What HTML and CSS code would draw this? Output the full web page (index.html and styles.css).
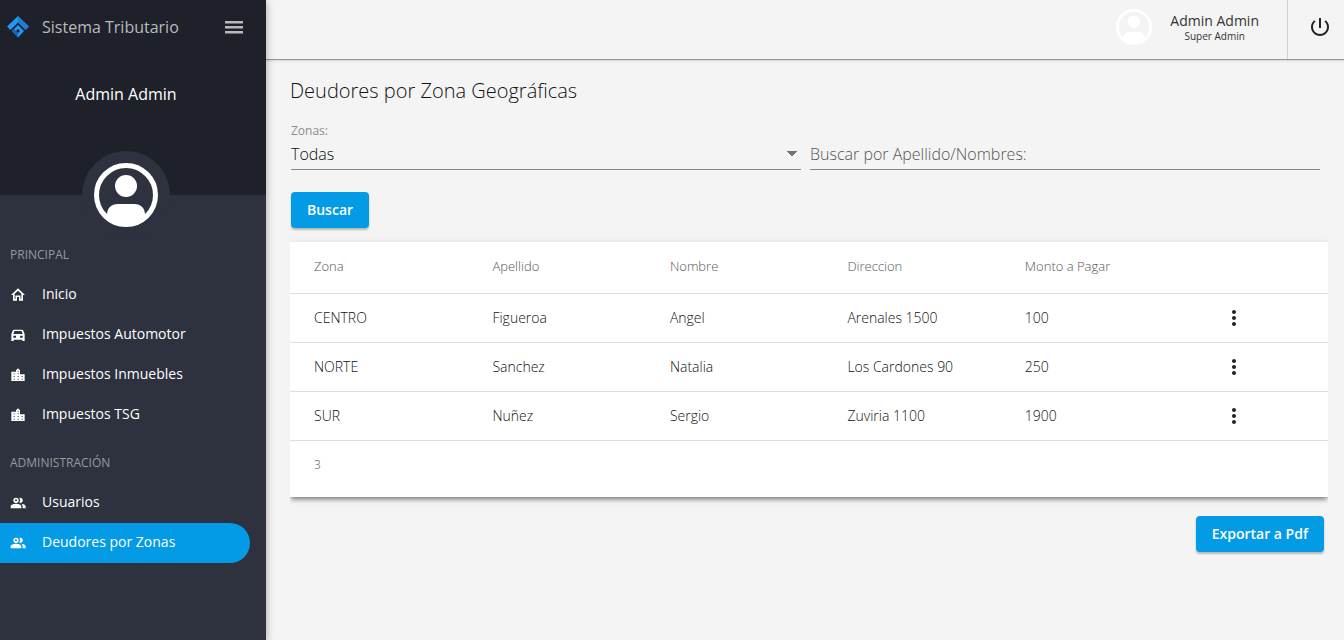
FILE: index.html
```html
<!DOCTYPE html>
<html lang="es">
<head>
<meta charset="utf-8">
<meta name="viewport" content="width=device-width, initial-scale=1">
<title>Sistema Tributario</title>
<link rel="stylesheet" href="styles.css">
</head>
<body>
<svg class="sprite" aria-hidden="true">
  <symbol id="account" viewBox="0 0 64 64">
    <circle cx="32" cy="32" r="29.5" fill="none" stroke="currentColor" stroke-width="5"/>
    <circle cx="32" cy="23" r="11" fill="currentColor"/>
    <path fill="currentColor" d="M13 52c0-7 4-11 11-11h16c7 0 11 4 11 11-5 6-12 10-19 10s-14-4-19-10z"/>
  </symbol>
  <symbol id="home" viewBox="0 0 24 24"><path fill="currentColor" d="M12 2L1.500 12H4.500v8.500H10.500V15h3v5.500h6V12h3zM12 5.500l5 4.600V18h-1.200v-5.200H8.200V18H7v-7.900z"/></symbol>
  <symbol id="car" viewBox="0 0 24 24"><path fill="currentColor" fill-rule="evenodd" d="M6 4h12c1 0 1.700.500 2 1.500L22 11v10h-3.500v-2h-13v2H2V11l2-5.500C4.300 4.500 5 4 6 4zm.600 2L5 10.500h14L17.400 6H6.600zM5 13v3h4v-3H5zm10 0v3h4v-3h-4z"/></symbol>
  <symbol id="city" viewBox="0 0 24 24"><path fill="currentColor" d="M15 11V5l-3-3-3 3v2H2v14h20V11h-7zm-8 8H5.500v-1.500H7V19zm0-4H5.500v-1.500H7V15zm0-4H5.500V9.500H7V11zm6 8h-1.500v-1.500H13V19zm0-4h-1.500v-1.500H13V15zm0-4h-1.500V9.500H13V11zm0-4h-1.500V5.500H13V7zm6 12h-1.500v-1.500H19V19zm0-4h-1.500v-1.500H19V15z"/></symbol>
  <symbol id="people" viewBox="0 0 24 24"><path fill="currentColor" fill-rule="evenodd" d="M9 13c2.700 0 8 1.200 8 4v3H1v-3c0-2.800 5.300-4 8-4zm8 0c2.300.300 6.500 1.500 6.500 4v3H19v-3c0-1.800-.800-3-2-4zM9 4a4 4 0 1 1 0 8 4 4 0 0 1 0-8zm0 2.500a1.500 1.500 0 1 0 0 3 1.500 1.500 0 0 0 0-3zM14 4.200c.300-.100.700-.200 1-.200a4 4 0 1 1-1 7.800c1.300-2.300 1.300-5.300 0-7.600z"/></symbol>
  <symbol id="dots" viewBox="0 0 24 24"><path fill="currentColor" d="M12 8c1.100 0 2-.900 2-2s-.900-2-2-2-2 .900-2 2 .900 2 2 2zm0 2c-1.100 0-2 .900-2 2s.900 2 2 2 2-.900 2-2-.900-2-2-2zm0 6c-1.100 0-2 .900-2 2s.900 2 2 2 2-.900 2-2-.900-2-2-2z"/></symbol>
</svg>
<div class="app">
  <aside class="sidebar">
    <div class="profile">
      <div class="brand">
        <svg class="logo" viewBox="0 0 22 22" aria-hidden="true">
          <path fill="#2196f3" d="M11 0l11 10.500-3.500 3.500L11 6.500 3.500 14 0 10.500z"/>
          <path fill="#1565c0" d="M11 0l11 10.500-3.500 3.500L11 6.500z" opacity=".5"/>
          <path fill="#2196f3" fill-rule="evenodd" d="M11 9l6 6-6 6.500L5 15zm0 4l-2 2 2 2 2-2z"/>
          <path fill="#1565c0" d="M5 15l2-2 4 4v4.500z"/>
        </svg>
        <span class="brand-name">Sistema Tributario</span>
        <button class="menu-button" type="button" aria-label="Menú">
          <svg width="24" height="24" viewBox="0 0 24 24" aria-hidden="true"><path fill="currentColor" d="M3 6h18v2.500H3zm0 5h18v2.500H3zm0 5h18v2.500H3z"/></svg>
        </button>
      </div>
      <div class="profile-name">Admin Admin</div>
      <div class="avatar"><svg width="64" height="64" aria-hidden="true"><use href="#account"/></svg></div>
    </div>
    <nav class="nav">
      <h2 class="nav-title">PRINCIPAL</h2>
      <a class="nav-item" href="#"><svg class="nav-icon"><use href="#home"/></svg>Inicio</a>
      <a class="nav-item" href="#"><svg class="nav-icon"><use href="#car"/></svg>Impuestos Automotor</a>
      <a class="nav-item" href="#"><svg class="nav-icon"><use href="#city"/></svg>Impuestos Inmuebles</a>
      <a class="nav-item" href="#"><svg class="nav-icon"><use href="#city"/></svg>Impuestos TSG</a>
      <h2 class="nav-title">ADMINISTRACIÓN</h2>
      <a class="nav-item" href="#"><svg class="nav-icon"><use href="#people"/></svg>Usuarios</a>
      <a class="nav-item active" href="#" aria-current="page"><svg class="nav-icon"><use href="#people"/></svg>Deudores por Zonas</a>
    </nav>
  </aside>
  <div class="page">
    <header class="toolbar">
      <button class="user" type="button">
        <svg class="user-avatar" width="36" height="36" aria-hidden="true"><use href="#account"/></svg>
        <span class="user-text"><span class="user-name">Admin Admin</span><span class="user-role">Super Admin</span></span>
      </button>
      <button class="power" type="button" aria-label="Salir">
        <svg width="24" height="24" viewBox="0 0 24 24" aria-hidden="true"><path fill="currentColor" d="M13 3h-2v10h2V3zm4.830 2.170l-1.420 1.420C17.990 7.860 19 9.810 19 12c0 3.870-3.130 7-7 7s-7-3.130-7-7c0-2.190 1.010-4.140 2.580-5.420L6.170 5.170C4.230 6.820 3 9.260 3 12c0 4.970 4.030 9 9 9s9-4.030 9-9c0-2.740-1.230-5.180-3.170-6.830z"/></svg>
      </button>
    </header>
    <main class="content">
      <h1 class="title">Deudores por Zona Geográficas</h1>
      <form class="filters">
        <div class="fields">
          <div class="field">
            <label class="field-label" for="zona">Zonas:</label>
            <select class="control select" id="zona"><option>Todas</option></select>
          </div>
          <div class="field">
            <input class="control" type="text" aria-label="Buscar por Apellido/Nombres" placeholder="Buscar por Apellido/Nombres:">
          </div>
        </div>
        <button class="button" type="button">Buscar</button>
      </form>
      <div class="card">
        <table class="table">
          <thead><tr><th>Zona</th><th>Apellido</th><th>Nombre</th><th>Direccion</th><th>Monto a Pagar</th><th></th></tr></thead>
          <tbody>
            <tr><td>CENTRO</td><td>Figueroa</td><td>Angel</td><td>Arenales 1500</td><td>100</td><td><button class="more" type="button" aria-label="Opciones"><svg width="24" height="24"><use href="#dots"/></svg></button></td></tr>
            <tr><td>NORTE</td><td>Sanchez</td><td>Natalia</td><td>Los Cardones 90</td><td>250</td><td><button class="more" type="button" aria-label="Opciones"><svg width="24" height="24"><use href="#dots"/></svg></button></td></tr>
            <tr><td>SUR</td><td>Nuñez</td><td>Sergio</td><td>Zuviria 1100</td><td>1900</td><td><button class="more" type="button" aria-label="Opciones"><svg width="24" height="24"><use href="#dots"/></svg></button></td></tr>
          </tbody>
          <tfoot><tr><td colspan="6">3</td></tr></tfoot>
        </table>
      </div>
      <div class="actions"><button class="button" type="button">Exportar a Pdf</button></div>
    </main>
  </div>
</div>
</body>
</html>
```
FILE: styles.css
```css
* { box-sizing: border-box; }
body { margin: 0; background: #f4f4f4; color: #333; font-family: "Open Sans", "Noto Sans", sans-serif; font-size: 14px; }
button { border: 0; padding: 0; background: none; font: inherit; color: inherit; cursor: pointer; }
svg { display: block; flex: none; }
.sprite { position: absolute; width: 0; height: 0; }
.app { display: flex; min-height: 100vh; }

.sidebar { position: relative; z-index: 1; flex: none; width: 266px; background: #2d323e; color: #fff; box-shadow: 0 2px 8px rgba(0, 0, 0, .35); }
.profile { display: flex; flex-direction: column; align-items: center; height: 195px; background: #1e2129; }
.brand { display: flex; flex: none; align-items: center; align-self: stretch; height: 54px; padding: 0 20px 0 7px; color: #b9babd; }
.logo { width: 22px; height: 22px; }
.brand-name { flex: 1; margin-left: 13px; font-size: 16px; }
.profile-name { margin: 29px 14px 0 0; font-size: 16px; line-height: 22px; }
.avatar { display: grid; place-items: center; flex: none; width: 88px; height: 88px; margin: 46px 14px 0 0; border-radius: 50%; background: #2d323e; }
.nav { padding: 40px 16px 0 0; }
.nav-title { margin: 0; padding-left: 10px; font-size: 12px; font-weight: 400; line-height: 40px; color: #9799a0; }
.nav-item + .nav-title { margin-top: 8px; }
.nav-item { display: flex; align-items: center; gap: 16px; height: 40px; padding: 0 0 4px 10px; border-radius: 0 20px 20px 0; color: #fff; text-decoration: none; }
.nav-icon { width: 16px; height: 16px; margin-top: 4px; }
.active { background: #039be5; }

.page { flex: 1; min-width: 0; }
.toolbar { display: flex; justify-content: flex-end; height: 60px; border-bottom: 1px solid #969696; box-shadow: 0 1px 2px rgba(0, 0, 0, .12); }
.user { display: flex; align-items: center; gap: 18px; padding: 0 28px 6px 0; }
.user-avatar { color: #fff; }
.user-text { display: flex; flex-direction: column; align-items: center; }
.user-name { font-size: 14px; line-height: 18px; }
.user-role { font-size: 10px; line-height: 12px; }
.power { display: flex; align-items: center; justify-content: center; width: 57px; padding: 0 0 6px 8px; border-left: 1px solid #d2d2d2; color: #222; }

.content { padding: 16px 16px 16px 24px; }
.title { margin: 0; font-size: 20px; font-weight: 300; line-height: 30px; color: #111; }
.filters { padding: 16px 8px 0 1px; }
.fields { display: flex; align-items: flex-end; gap: 9px; margin-bottom: 22px; }
.field { flex: 1; min-width: 0; }
.field-label { display: block; font-size: 12px; line-height: 18px; color: #8d8d8d; }
.control { display: block; width: 100%; height: 30px; padding: 0 0 1px; border: 0; border-bottom: 1px solid #858585; border-radius: 0; outline: 0; background: none; font: inherit; font-size: 16px; font-weight: 300; color: #111; }
.control::placeholder { color: #555; opacity: 1; }
.select { appearance: none; background: linear-gradient(to bottom right, #757575 50%, transparent 50%) right 4px top 11px / 5px 5px no-repeat, linear-gradient(to bottom left, #757575 50%, transparent 50%) right 9px top 11px / 5px 5px no-repeat; }
.button { height: 36px; padding: 0 16px; border-radius: 4px; background: #039be5; color: #fff; font-weight: 600; line-height: 36px; box-shadow: 0 2px 2px rgba(0, 0, 0, .25); }

/* The shadow is kept above and below the card only. */
.card { margin-top: 14px; background: #fff; box-shadow: 0 3px 5px -1px rgba(0, 0, 0, .5), 0 1px 8px rgba(0, 0, 0, .08); clip-path: inset(-12px 0); }
.table { width: 100%; table-layout: fixed; border-collapse: collapse; font-weight: 300; color: #111; }
.table th, .table td { height: 49px; padding: 0; border-bottom: 1px solid #dedede; text-align: left; }
.table th { width: 17.1%; height: 51px; padding-bottom: 2px; font-size: 13px; font-weight: 300; color: #555; }
.table th:first-child { width: 19.5%; }
.table th:last-child { width: auto; }
.table th:first-child, .table td:first-child { padding-left: 24px; }
.table tfoot td { height: 57px; padding-bottom: 8px; border: 0; font-size: 12px; color: #555; }
.more { display: grid; place-items: center; width: 40px; height: 40px; margin-left: 12px; color: #222; }
.actions { display: flex; justify-content: flex-end; padding: 19px 4px 0 0; }
```
